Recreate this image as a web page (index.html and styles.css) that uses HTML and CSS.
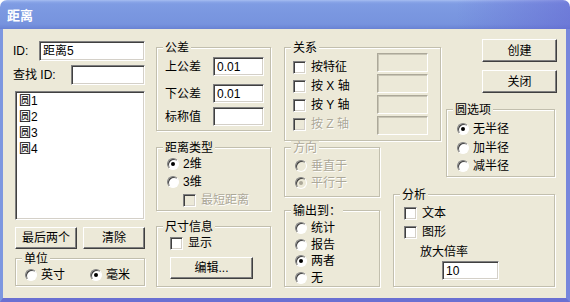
FILE: index.html
```html
<!DOCTYPE html>
<html lang="zh">
<head>
<meta charset="utf-8">
<title>距离</title>
<link rel="stylesheet" href="styles.css">
</head>
<body>
<div class="window">
  <div class="titlebar"><span class="title">距离</span></div>
  <div class="client">
    <div class="col1">
      <div class="row-id">
        <span class="lbl">ID:</span>
        <div class="input w106">距离5</div>
      </div>
      <div class="row-find">
        <span class="lbl">查找 ID:</span>
        <div class="input w74"></div>
      </div>
      <div class="listbox">
        <div class="item">圆1</div>
        <div class="item">圆2</div>
        <div class="item">圆3</div>
        <div class="item">圆4</div>
      </div>
      <div class="btnrow">
        <div class="btn w62">最后两个</div>
        <div class="btn w62">清除</div>
      </div>
      <div class="group g-unit">
        <span class="gtitle">单位</span>
        <div class="unit-row">
          <span class="opt"><span class="radio"></span>英寸</span>
          <span class="opt"><span class="radio on"></span>毫米</span>
        </div>
      </div>
    </div>

    <div class="col2">
      <div class="group g-tol">
        <span class="gtitle">公差</span>
        <div class="tol-row r1"><span>上公差</span><div class="input w51">0.01</div></div>
        <div class="tol-row r2"><span>下公差</span><div class="input w51">0.01</div></div>
        <div class="tol-row r3"><span>标称值</span><div class="input w51"></div></div>
      </div>
      <div class="group g-type">
        <span class="gtitle">距离类型</span>
        <div class="vlist type-list">
          <span class="opt"><span class="radio on"></span>2维</span>
          <span class="opt"><span class="radio"></span>3维</span>
          <span class="opt indent dis"><span class="chk dis"></span>最短距离</span>
        </div>
      </div>
      <div class="group g-size">
        <span class="gtitle">尺寸信息</span>
        <span class="opt size-chk"><span class="chk"></span>显示</span>
        <div class="btn edit">编辑...</div>
      </div>
    </div>

    <div class="right">
      <div class="group g-rel">
        <span class="gtitle">关系</span>
        <div class="rel-body">
          <div class="vlist rel-list">
            <span class="opt"><span class="chk"></span>按特征</span>
            <span class="opt"><span class="chk"></span>按 X 轴</span>
            <span class="opt"><span class="chk"></span>按 Y 轴</span>
            <span class="opt dis"><span class="chk dis"></span>按 Z 轴</span>
          </div>
          <div class="rel-boxes">
            <div class="sunken"></div>
            <div class="sunken"></div>
            <div class="sunken"></div>
            <div class="sunken"></div>
          </div>
        </div>
      </div>

      <div class="btns">
        <div class="btn big">创建</div>
        <div class="btn big">关闭</div>
      </div>

      <div class="group g-circ">
        <span class="gtitle">圆选项</span>
        <div class="vlist circ-list">
          <span class="opt"><span class="radio on"></span>无半径</span>
          <span class="opt"><span class="radio"></span>加半径</span>
          <span class="opt"><span class="radio"></span>减半径</span>
        </div>
      </div>

      <div class="group g-dir">
        <span class="gtitle dis">方向</span>
        <div class="vlist dir-list">
          <span class="opt dis"><span class="radio dis"></span>垂直于</span>
          <span class="opt dis"><span class="radio dis on"></span>平行于</span>
        </div>
      </div>

      <div class="group g-out">
        <span class="gtitle">输出到：</span>
        <div class="vlist out-list">
          <span class="opt"><span class="radio"></span>统计</span>
          <span class="opt"><span class="radio"></span>报告</span>
          <span class="opt"><span class="radio on"></span>两者</span>
          <span class="opt"><span class="radio"></span>无</span>
        </div>
      </div>

      <div class="group g-ana">
        <span class="gtitle">分析</span>
        <div class="vlist ana-list">
          <span class="opt"><span class="chk"></span>文本</span>
          <span class="opt"><span class="chk"></span>图形</span>
        </div>
        <div class="zoom-lbl">放大倍率</div>
        <div class="input w57 zoom-in">10</div>
      </div>
    </div>
  </div>
</div>
</body>
</html>
```
FILE: styles.css
```css
html, body {
  margin: 0;
  padding: 0;
  background: #ffffff;
}
body {
  font-family: "Liberation Sans", "Noto Sans CJK SC", sans-serif;
  font-size: 12px;
  line-height: 14px;
  color: #000;
}
.window {
  width: 570px;
  height: 302px;
  box-sizing: border-box;
  display: flex;
  flex-direction: column;
}
.titlebar {
  height: 29px;
  flex: none;
  border-radius: 7px 7px 0 0;
  background:
    linear-gradient(to right, rgba(110,110,215,0) 80%, rgba(100,100,210,0.55) 100%),
    linear-gradient(to bottom, #a6bdf1 0px, #89a5e8 2px, #7f9ce3 4px, #7a97e0 14px, #7793de 24px, #6c86d6 28px, #6a80d2 29px);
  display: flex;
  align-items: center;
  padding-left: 7px;
}
.title {
  color: #fff;
  font-weight: bold;
  font-size: 13px;
  font-family: "Noto Sans CJK SC", sans-serif;
  line-height: 14px;
  margin-top: 1px;
}
.client {
  flex: 1;
  background: #ece9d8;
  border-left: 3px solid #7d97e0;
  border-right: 4px solid #7787dc;
  border-bottom: 4px solid #6a70d2;
  display: flex;
  align-items: flex-start;
  padding-left: 10px;
}

/* generic controls */
.input {
  box-sizing: border-box;
  height: 20px;
  background: #fff;
  border: 1px solid;
  border-color: #808080 #fff #fff #808080;
  box-shadow: inset 1px 1px 0 #404040, inset -1px -1px 0 #d4d0c8;
  padding: 2px 3px 0 3px;
  line-height: 14px;
  white-space: nowrap;
}
.w106 { width: 106px; }
.w74 { width: 74px; }
.w51 { width: 51px; }
.w57 { width: 57px; }

.btn {
  box-sizing: border-box;
  background: #ece9d8;
  border: 1px solid;
  border-color: #fff #404040 #404040 #fff;
  box-shadow: inset -1px -1px 0 #808080;
  display: flex;
  align-items: center;
  justify-content: center;
  height: 22px;
}
.w62 { width: 62px; }

.chk {
  box-sizing: border-box;
  width: 13px;
  height: 13px;
  flex: none;
  background: #fff;
  border: 1px solid;
  border-color: #808080 #fff #fff #808080;
  box-shadow: inset 1px 1px 0 #404040, inset -1px -1px 0 #d4d0c8;
  margin-right: 1px;
}
.chk.dis { background: #ece9d8; }

.radio {
  box-sizing: border-box;
  width: 12px;
  height: 12px;
  flex: none;
  border-radius: 50%;
  background: #fff;
  border: 1px solid;
  border-color: #808080 #ffffff #ffffff #808080;
  box-shadow: inset 1px 1px 0 #404040;
  position: relative;
}
.radio.dis { background: #ece9d8; }
.radio.on::after {
  content: "";
  position: absolute;
  left: 3px;
  top: 3px;
  width: 4px;
  height: 4px;
  border-radius: 50%;
  background: #000;
}
.radio.dis.on::after { background: #aca899; }

.opt {
  display: flex;
  align-items: center;
  gap: 4px;
  height: 14px;
  white-space: nowrap;
}
.dis {
  color: #aca899;
  text-shadow: 1px 1px 0 #fff;
}

.group {
  box-sizing: border-box;
  border: 1px solid #c2bfae;
  box-shadow: inset 1px 1px 0 #fff, 1px 1px 0 #fff;
}
.gtitle {
  display: block;
  width: max-content;
  height: 14px;
  background: #ece9d8;
  margin: -7px 0 0 6px;
  padding: 0 2px;
  line-height: 14px;
  white-space: nowrap;
}
.vlist {
  display: flex;
  flex-direction: column;
}

/* column 1 */
.col1 {
  width: 132px;
  flex: none;
  display: flex;
  flex-direction: column;
}
.row-id, .row-find {
  display: flex;
  align-items: center;
  justify-content: space-between;
}
.row-id { margin-top: 12px; }
.row-find { margin-top: 4px; }
.listbox {
  box-sizing: border-box;
  margin: 6px 0 0 2px;
  width: 130px;
  height: 129px;
  background: #fff;
  border: 1px solid;
  border-color: #808080 #fff #fff #808080;
  box-shadow: inset 1px 1px 0 #404040, inset -1px -1px 0 #d4d0c8;
  padding: 1px 3px;
}
.item { line-height: 16px; }
.btnrow {
  display: flex;
  gap: 6px;
  margin: 7px 0 0 2px;
}
.g-unit {
  margin: 9px 0 0 2px;
  width: 130px;
  height: 28px;
}
.unit-row {
  display: flex;
  gap: 25px;
  padding-left: 9px;
  margin-top: 2px;
}

/* column 2 */
.col2 {
  width: 115px;
  flex: none;
  margin-left: 11px;
  display: flex;
  flex-direction: column;
}
.g-tol {
  margin-top: 18px;
  height: 84px;
}
.tol-row {
  display: flex;
  align-items: center;
  justify-content: space-between;
  padding: 0 6px 0 8px;
  height: 19px;
}
.tol-row .input { height: 19px; }
.r1 { margin-top: 2px; }
.r2 { margin-top: 8px; }
.r3 { margin-top: 4px; }
.g-type {
  margin-top: 16px;
  height: 64px;
}
.type-list {
  padding-left: 10px;
  margin-top: 2px;
  gap: 4px;
}
.indent { padding-left: 16px; }
.g-size {
  margin-top: 15px;
  height: 61px;
}
.size-chk {
  margin: 2px 0 0 13px;
}
.edit {
  margin: 7px 0 0 13px;
  width: 83px;
  height: 22px;
}

/* right area */
.right {
  flex: none;
  margin-left: 13px;
  margin-top: 10px;
  display: grid;
  grid-template-columns: 96px 13px 48px 5px 109px 2px;
  grid-template-rows: 8px 62px 32px 6px 30px 17px 3px 13px 77px;
}
.g-rel { grid-column: 1 / 4; grid-row: 2 / 4; }
.btns {
  grid-column: 5 / 7;
  grid-row: 1 / 3;
  display: flex;
  flex-direction: column;
  align-items: flex-end;
  gap: 8px;
}
.btn.big { width: 75px; height: 23px; }
.g-circ { grid-column: 5 / 6; grid-row: 3 / 6; }
.g-dir { grid-column: 1 / 2; grid-row: 5 / 8; }
.g-ana { grid-column: 3 / 6; grid-row: 7 / 10; }
.g-out { grid-column: 1 / 2; grid-row: 9 / 10; }

.rel-body {
  display: flex;
  justify-content: space-between;
  padding: 0 12px 0 8px;
}
.rel-list {
  margin-top: 5px;
  gap: 5px;
}
.rel-boxes {
  display: flex;
  flex-direction: column;
  gap: 2px;
  margin-top: -2px;
}
.sunken {
  box-sizing: border-box;
  width: 51px;
  height: 19px;
  border: 1px solid;
  border-color: #aca899 #fff #fff #aca899;
  box-shadow: inset 1px 1px 0 #c8c5b5;
}

.circ-list {
  padding-left: 10px;
  margin-top: 5px;
  gap: 4.5px;
}
.dir-list {
  padding-left: 10px;
  margin-top: 4px;
  gap: 3px;
}
.out-list {
  padding-left: 10px;
  margin-top: 3px;
  gap: 2.5px;
}
.ana-list {
  padding-left: 10px;
  margin-top: 4px;
  gap: 5px;
}
.zoom-lbl {
  margin: 6px 0 0 26px;
  height: 14px;
}
.zoom-in {
  margin: 2px 0 0 48px;
  height: 19px;
}
```
